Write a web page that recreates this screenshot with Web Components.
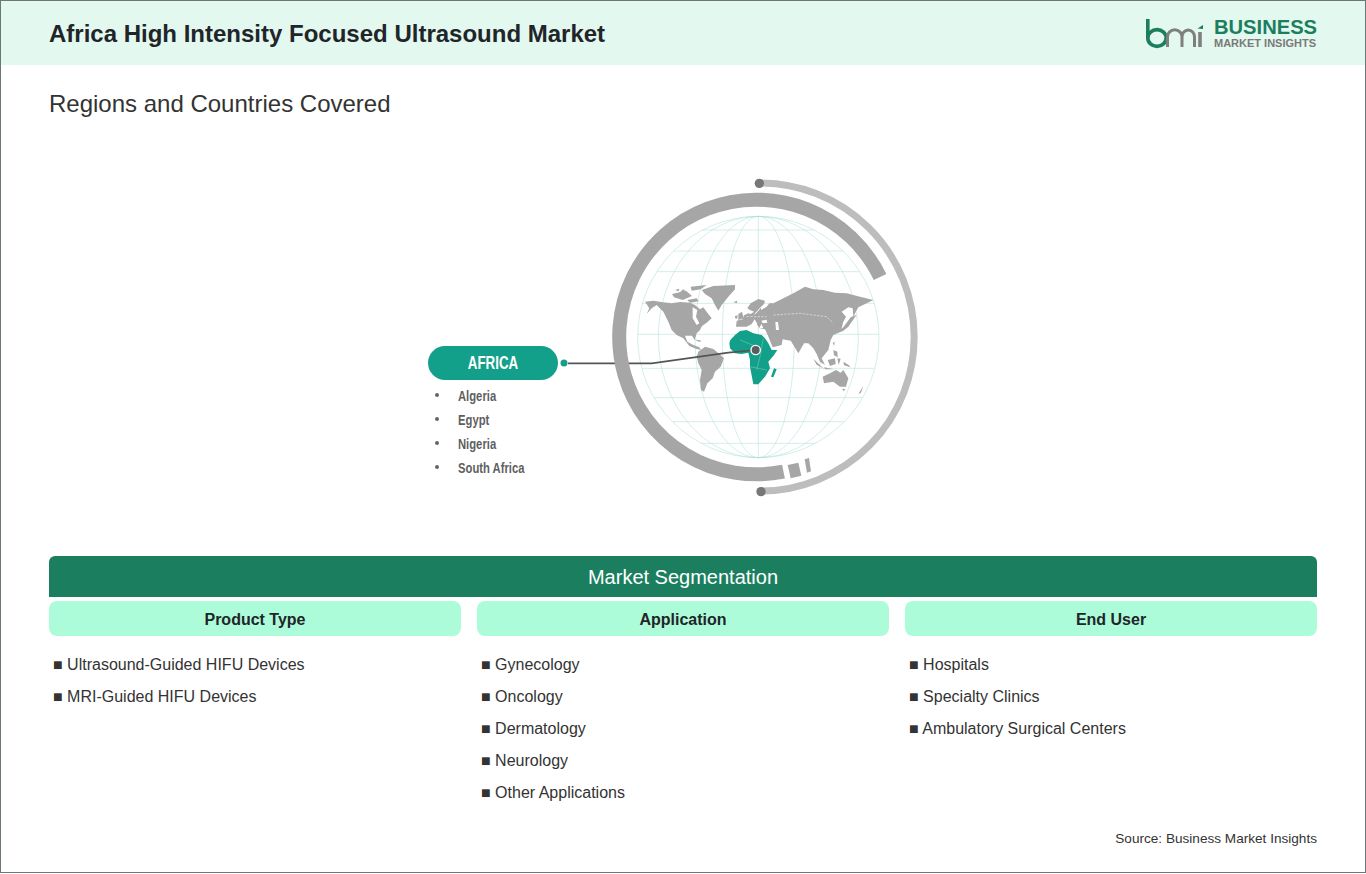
<!DOCTYPE html>
<html lang="en"><head><meta charset="utf-8"><title>Africa High Intensity Focused Ultrasound Market</title>
<style>
html,body{margin:0;padding:0;background:#fff;font-family:"Liberation Sans",Arial,sans-serif}
</style></head><body>
<bmi-page>
  <bmi-header slot="header">Africa High Intensity Focused Ultrasound Market</bmi-header>
  <h2-line>Regions and Countries Covered</h2-line>
  <region-diagram region="AFRICA">
    <li-country>Algeria</li-country>
    <li-country>Egypt</li-country>
    <li-country>Nigeria</li-country>
    <li-country>South Africa</li-country>
  </region-diagram>
  <seg-panel heading="Market Segmentation">
    <seg-column heading="Product Type">
      <seg-item>Ultrasound-Guided HIFU Devices</seg-item>
      <seg-item>MRI-Guided HIFU Devices</seg-item>
    </seg-column>
    <seg-column heading="Application">
      <seg-item>Gynecology</seg-item>
      <seg-item>Oncology</seg-item>
      <seg-item>Dermatology</seg-item>
      <seg-item>Neurology</seg-item>
      <seg-item>Other Applications</seg-item>
    </seg-column>
    <seg-column heading="End User">
      <seg-item>Hospitals</seg-item>
      <seg-item>Specialty Clinics</seg-item>
      <seg-item>Ambulatory Surgical Centers</seg-item>
    </seg-column>
  </seg-panel>
  <source-note>Source: Business Market Insights</source-note>
</bmi-page>
<script>
function def(name, html){
  customElements.define(name, class extends HTMLElement{
    constructor(){super();this.attachShadow({mode:'open'});}
    connectedCallback(){
      let h=html;
      for(const a of this.getAttributeNames()) h=h.split('{{'+a+'}}').join(this.getAttribute(a));
      this.shadowRoot.innerHTML=h;
    }
  });
}
def('bmi-page',`<style>:host{display:flex;flex-direction:column;box-sizing:border-box;width:1366px;height:873px;border:1px solid #6d7678;background:#fff;overflow:hidden}</style><slot name="header"></slot><slot></slot>`);
def('bmi-header',`<style>
:host{display:flex;align-items:center;justify-content:space-between;height:64px;padding:0 48px;background:#e3f8ef;flex:none}
h1{margin:0;padding-top:2px;font:bold 24px/28px "Liberation Sans",Arial,sans-serif;color:#212529}
</style><h1><slot></slot></h1><bmi-logo></bmi-logo>`);
def('bmi-logo',`<style>
:host{display:flex;align-items:center;gap:9px;height:64px}
svg{display:block;flex:none}
.t{display:flex;flex-direction:column;width:103px;margin-top:-2px}
.b{font:bold 21px/21px "Liberation Sans",Arial,sans-serif;color:#1b7f5f;transform:scaleX(.96);transform-origin:0 50%;white-space:nowrap}
.m{font:bold 11px/12px "Liberation Sans",Arial,sans-serif;color:#7a7a7a;white-space:nowrap}
</style>
<svg width="60" height="36" viewBox="1146 14 60 36" fill="none">
<path d="M1148.8 18V37" stroke="#1b7f5f" stroke-width="3.6"/>
<ellipse cx="1158" cy="37" rx="9.2" ry="8.4" stroke="#1b7f5f" stroke-width="3.6"/>
<path d="M1168.5 46V36A7 7 0 0 1 1183 36V46M1183 36A6.2 7 0 0 1 1195.5 36V46" stroke="#7f7f7f" stroke-width="3"/>
<path d="M1201 31V46" stroke="#7f7f7f" stroke-width="3.6"/>
<path d="M1198.5 27.5L1204 24V28Z" fill="#1b7f5f"/>
</svg>
<div class="t"><div class="b">BUSINESS</div><div class="m">MARKET INSIGHTS</div></div>`);
def('h2-line',`<style>:host{display:block;margin:25px 48px 0;font:24px/28px "Liberation Sans",Arial,sans-serif;color:#333;flex:none}</style><slot></slot>`);
def('region-diagram',`<style>
:host{display:flex;align-items:flex-start;height:438px;padding-left:427px;flex:none}
.l{width:132px;margin-top:228px;flex:none}
.p{height:34px;border-radius:17px;background:#13a08a;color:#fff;display:flex;align-items:center;justify-content:center;box-sizing:border-box;width:130px}
.p span{display:inline-block;font:bold 18px "Liberation Sans",sans-serif;transform:scaleX(.74)}
ul{margin:3px 0 0;padding:0;list-style:none}
svg{display:block;flex:none;margin-top:52px}
</style>
<div class="l"><div class="p"><span>{{region}}</span></div><ul><slot></slot></ul></div>
<svg width="370" height="330" viewBox="-120 0 1110 990" fill="none">
<defs><clipPath id="g"><circle cx="475" cy="501" r="362"/></clipPath></defs>
<g stroke="#a9ddd6" stroke-width="1.5">
<circle cx="475" cy="501" r="362"/>
<ellipse cx="475" cy="501" rx="300" ry="362"/>
<ellipse cx="475" cy="501" rx="190" ry="362"/>
<ellipse cx="475" cy="501" rx="108" ry="362"/>
<path d="M475 139V863"/>
<g clip-path="url(#g)"><path d="M100 180H850M100 243H850M100 305H850M100 400H850M100 493H850M100 595H850M100 683H850M100 755H850M100 820H850"/></g>
</g>
<g fill="#a6a6a6">
<path d="M135 395L160 392L188 397L215 400L240 396L270 398L285 405L300 418L310 412L322 428L335 445L320 458L306 468L300 480L290 490L284 510L276 497L255 497L262 515L280 525L298 532L303 540L288 536L268 528L250 505L230 495L215 480L205 455L190 425L170 405L155 415L140 432L148 415Z"/>
<path d="M272 350L320 345L302 358L275 362ZM216 372L258 362L276 378L248 390L222 382ZM262 390L290 385L296 394L270 398ZM283 508L305 512L298 516ZM240 365L250 358L256 364ZM225 360L238 356L236 364Z"/>
<path d="M305 360L340 348L405 345L405 358L385 380L365 405L355 422L345 405L335 385L315 372Z"/>
<path d="M400 396L412 392L410 400ZM415 432L426 425L431 445L415 450ZM405 438L413 436L412 446L405 445Z"/>
<path d="M295 545L315 530L340 537L358 552L372 565L362 590L345 605L338 625L322 640L312 665L303 660L300 630L305 600L295 580L290 560Z"/>
<path d="M408 470L410 452L428 448L432 436L445 430L452 432L462 425L450 420L442 415L452 400L475 387L495 392L492 402L482 412L484 420L500 410L508 400L520 400L550 385L580 370L615 350L640 358L670 360L705 368L740 370L780 380L820 390L800 400L775 412L765 430L760 440L758 415L745 412L725 425L738 440L730 455L722 485L700 495L692 510L685 540L665 565L675 585L660 575L650 552L640 535L625 520L612 520L595 550L580 525L572 512L548 508L545 525L518 532L503 495L495 478L478 474L470 462L455 462L440 470Z"/>
<path d="M752 442L770 434L745 470L728 484L706 490L730 472ZM640 566L665 590L672 596L650 584ZM672 592L702 598L675 598ZM683 570L705 565L707 582L690 588ZM712 565L722 566L716 585ZM700 540L712 545L713 562L702 556ZM698 518L704 516L702 528ZM730 575L746 585L752 592L732 586Z"/>
<path d="M668 620L690 610L708 600L722 608L730 600L745 625L738 650L720 650L700 635L672 640ZM726 656L736 657L731 664ZM775 672L790 648L783 668Z"/>
</g>
<g fill="#fff"><path d="M278 412L292 420L288 440L298 460L290 465L278 445ZM484 452L500 449L502 458L488 460ZM526 456L534 456L537 480L528 480ZM455 462L464 448L472 462ZM478 474L484 462L490 474Z"/></g>
<path d="M482 412L472 425L464 432" stroke="#fff" stroke-width="3"/>
<path d="M520 435L600 430L680 440L700 460M440 440L500 440" stroke="#fff" stroke-width="1.5" stroke-dasharray="7 4"/>
<path d="M388 520L391 510L405 495L420 483L440 480L460 490L485 495L495 505L505 520L515 540L532 540L520 558L505 575L510 595L495 620L475 643L460 643L450 590L450 570L445 548L425 552L405 550L390 535Z" fill="#13a08a"/>
<path d="M522 595L530 598L520 622L513 620Z" fill="#13a08a"/>
<path d="M420 510L470 530M490 505L480 560L470 600M450 590L500 600" stroke="#9fdcd0" stroke-width="1.2"/>
<path d="M-96 580H155L385 548L467 540" stroke="#555" stroke-width="5"/>
<circle cx="467" cy="540" r="16" fill="#fff"/><circle cx="467" cy="540" r="12" fill="#5c5c5c"/>
<circle cx="-108" cy="579" r="10.5" fill="#13a08a"/>
<path d="M840.3 321.2A412 412 0 1 0 550.5 905" stroke="#a6a6a6" stroke-width="42"/>
<path d="M563 885L595 878L604 917L572 925ZM614 868L627 864L633 904L621 908Z" fill="#a6a6a6"/>
<path d="M478 39A462 462 0 0 1 483 963" stroke="#bdbdbd" stroke-width="21"/>
<circle cx="478" cy="40" r="14" fill="#777"/><circle cx="483" cy="965" r="14" fill="#777"/>
</svg>`);
def('li-country',`<style>
:host{display:flex;align-items:center;height:24px;color:#5f5f5f}
i{width:4px;height:4px;border-radius:50%;background:#666;margin:0 19px 0 7px;flex:none}
span{display:inline-block;font:bold 15px "Liberation Sans",sans-serif;transform:scaleX(.75);transform-origin:0 50%;white-space:nowrap}
</style><i></i><span><slot></slot></span>`);
def('seg-panel',`<style>
:host{display:block;margin:0 48px;flex:none}
h3{margin:0;height:41px;background:#1b7f5f;color:#fff;border-radius:6px 6px 0 0;font:20px/42px "Liberation Sans",Arial,sans-serif;text-align:center}
.c{display:grid;grid-template-columns:repeat(3,412px);gap:16px;margin-top:4px}
</style><h3>{{heading}}</h3><div class="c"><slot></slot></div>`);
def('seg-column',`<style>
:host{display:block;height:228px}
h4{margin:0 0 13px;height:35px;border-radius:8px;background:#adfcd9;color:#212529;font:bold 16px/37px "Liberation Sans",Arial,sans-serif;text-align:center}
</style><h4>{{heading}}</h4><slot></slot>`);
def('seg-item',`<style>
:host{display:block;height:32px;padding-left:4px;font:16px/32px "Liberation Sans",Arial,sans-serif;color:#333}
</style>■ <slot></slot>`);
def('source-note',`<style>:host{display:block;margin:0 48px;text-align:right;font:13.6px/20px "Liberation Sans",Arial,sans-serif;color:#333}</style><slot></slot>`);
</script>
</body></html>
